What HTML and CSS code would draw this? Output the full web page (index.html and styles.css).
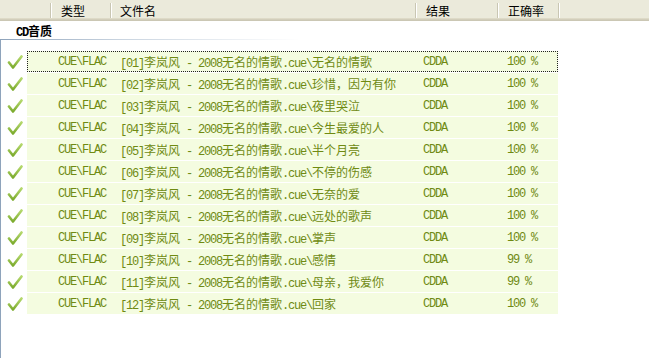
FILE: index.html
```html
<!DOCTYPE html>
<html>
<head>
<meta charset="utf-8">
<link rel="stylesheet" href="styles.css">
</head>
<body>
<svg class="defs" width="0" height="0"><defs><linearGradient id="g" x1="0" y1="0" x2="0" y2="1"><stop offset="0" stop-color="#b4d86c"/><stop offset="1" stop-color="#7cab2e"/></linearGradient></defs></svg>
<div class="header">
  <div class="hc h0"></div>
  <div class="hc h1">类型</div>
  <div class="hc h2">文件名</div>
  <div class="hc h3">结果</div>
  <div class="hc h4">正确率</div>
  <div class="hc h5"></div>
</div>
<div class="title">CD<span class="z">音质</span></div>
<div class="rule"></div>
<div class="content">
  <div class="item focus"><span class="ico"><svg width="16" height="16" viewBox="0 0 16 16"><polyline points="2,8.5 6,13.5 14.5,2.5" fill="none" stroke="url(#g)" stroke-width="2.6" stroke-linecap="round" stroke-linejoin="round"/></svg></span><div class="cells"><span class="c-type">CUE\FLAC</span><span class="c-name">[01]<span class="z">李岚风</span> - 2008<span class="z">无名的情歌</span>.cue\<span class="z">无名的情歌</span></span><span class="c-res">CDDA</span><span class="c-rate">100 %</span></div></div>
  <div class="item"><span class="ico"><svg width="16" height="16" viewBox="0 0 16 16"><polyline points="2,8.5 6,13.5 14.5,2.5" fill="none" stroke="url(#g)" stroke-width="2.6" stroke-linecap="round" stroke-linejoin="round"/></svg></span><div class="cells"><span class="c-type">CUE\FLAC</span><span class="c-name">[02]<span class="z">李岚风</span> - 2008<span class="z">无名的情歌</span>.cue\<span class="z">珍惜，因为有你</span></span><span class="c-res">CDDA</span><span class="c-rate">100 %</span></div></div>
  <div class="item"><span class="ico"><svg width="16" height="16" viewBox="0 0 16 16"><polyline points="2,8.5 6,13.5 14.5,2.5" fill="none" stroke="url(#g)" stroke-width="2.6" stroke-linecap="round" stroke-linejoin="round"/></svg></span><div class="cells"><span class="c-type">CUE\FLAC</span><span class="c-name">[03]<span class="z">李岚风</span> - 2008<span class="z">无名的情歌</span>.cue\<span class="z">夜里哭泣</span></span><span class="c-res">CDDA</span><span class="c-rate">100 %</span></div></div>
  <div class="item"><span class="ico"><svg width="16" height="16" viewBox="0 0 16 16"><polyline points="2,8.5 6,13.5 14.5,2.5" fill="none" stroke="url(#g)" stroke-width="2.6" stroke-linecap="round" stroke-linejoin="round"/></svg></span><div class="cells"><span class="c-type">CUE\FLAC</span><span class="c-name">[04]<span class="z">李岚风</span> - 2008<span class="z">无名的情歌</span>.cue\<span class="z">今生最爱的人</span></span><span class="c-res">CDDA</span><span class="c-rate">100 %</span></div></div>
  <div class="item"><span class="ico"><svg width="16" height="16" viewBox="0 0 16 16"><polyline points="2,8.5 6,13.5 14.5,2.5" fill="none" stroke="url(#g)" stroke-width="2.6" stroke-linecap="round" stroke-linejoin="round"/></svg></span><div class="cells"><span class="c-type">CUE\FLAC</span><span class="c-name">[05]<span class="z">李岚风</span> - 2008<span class="z">无名的情歌</span>.cue\<span class="z">半个月亮</span></span><span class="c-res">CDDA</span><span class="c-rate">100 %</span></div></div>
  <div class="item"><span class="ico"><svg width="16" height="16" viewBox="0 0 16 16"><polyline points="2,8.5 6,13.5 14.5,2.5" fill="none" stroke="url(#g)" stroke-width="2.6" stroke-linecap="round" stroke-linejoin="round"/></svg></span><div class="cells"><span class="c-type">CUE\FLAC</span><span class="c-name">[06]<span class="z">李岚风</span> - 2008<span class="z">无名的情歌</span>.cue\<span class="z">不停的伤感</span></span><span class="c-res">CDDA</span><span class="c-rate">100 %</span></div></div>
  <div class="item"><span class="ico"><svg width="16" height="16" viewBox="0 0 16 16"><polyline points="2,8.5 6,13.5 14.5,2.5" fill="none" stroke="url(#g)" stroke-width="2.6" stroke-linecap="round" stroke-linejoin="round"/></svg></span><div class="cells"><span class="c-type">CUE\FLAC</span><span class="c-name">[07]<span class="z">李岚风</span> - 2008<span class="z">无名的情歌</span>.cue\<span class="z">无奈的爱</span></span><span class="c-res">CDDA</span><span class="c-rate">100 %</span></div></div>
  <div class="item"><span class="ico"><svg width="16" height="16" viewBox="0 0 16 16"><polyline points="2,8.5 6,13.5 14.5,2.5" fill="none" stroke="url(#g)" stroke-width="2.6" stroke-linecap="round" stroke-linejoin="round"/></svg></span><div class="cells"><span class="c-type">CUE\FLAC</span><span class="c-name">[08]<span class="z">李岚风</span> - 2008<span class="z">无名的情歌</span>.cue\<span class="z">远处的歌声</span></span><span class="c-res">CDDA</span><span class="c-rate">100 %</span></div></div>
  <div class="item"><span class="ico"><svg width="16" height="16" viewBox="0 0 16 16"><polyline points="2,8.5 6,13.5 14.5,2.5" fill="none" stroke="url(#g)" stroke-width="2.6" stroke-linecap="round" stroke-linejoin="round"/></svg></span><div class="cells"><span class="c-type">CUE\FLAC</span><span class="c-name">[09]<span class="z">李岚风</span> - 2008<span class="z">无名的情歌</span>.cue\<span class="z">掌声</span></span><span class="c-res">CDDA</span><span class="c-rate">100 %</span></div></div>
  <div class="item"><span class="ico"><svg width="16" height="16" viewBox="0 0 16 16"><polyline points="2,8.5 6,13.5 14.5,2.5" fill="none" stroke="url(#g)" stroke-width="2.6" stroke-linecap="round" stroke-linejoin="round"/></svg></span><div class="cells"><span class="c-type">CUE\FLAC</span><span class="c-name">[10]<span class="z">李岚风</span> - 2008<span class="z">无名的情歌</span>.cue\<span class="z">感情</span></span><span class="c-res">CDDA</span><span class="c-rate">99 %</span></div></div>
  <div class="item"><span class="ico"><svg width="16" height="16" viewBox="0 0 16 16"><polyline points="2,8.5 6,13.5 14.5,2.5" fill="none" stroke="url(#g)" stroke-width="2.6" stroke-linecap="round" stroke-linejoin="round"/></svg></span><div class="cells"><span class="c-type">CUE\FLAC</span><span class="c-name">[11]<span class="z">李岚风</span> - 2008<span class="z">无名的情歌</span>.cue\<span class="z">母亲，我爱你</span></span><span class="c-res">CDDA</span><span class="c-rate">99 %</span></div></div>
  <div class="item"><span class="ico"><svg width="16" height="16" viewBox="0 0 16 16"><polyline points="2,8.5 6,13.5 14.5,2.5" fill="none" stroke="url(#g)" stroke-width="2.6" stroke-linecap="round" stroke-linejoin="round"/></svg></span><div class="cells"><span class="c-type">CUE\FLAC</span><span class="c-name">[12]<span class="z">李岚风</span> - 2008<span class="z">无名的情歌</span>.cue\<span class="z">回家</span></span><span class="c-res">CDDA</span><span class="c-rate">100 %</span></div></div>
</div>
</body>
</html>
```
FILE: styles.css
```css
html, body {
  margin: 0;
  padding: 0;
  background: #fff;
  height: 100%;
  overflow: hidden;
}
body {
  font-family: "Noto Sans CJK SC", sans-serif;
  font-size: 12px;
}
.defs {
  position: absolute;
  width: 0;
  height: 0;
}
.header {
  display: flex;
  height: 21px;
  box-sizing: border-box;
  padding-top: 3px;
  background: linear-gradient(to bottom, #ebeadb 0, #ebeadb 18px, #e2dfcc 18px, #d9d5c2 19px, #cbc7b4 20px, #cbc7b4 21px);
}
.hc {
  height: 15px;
  line-height: 16px;
  box-sizing: border-box;
  padding-left: 10px;
  border-right: 1px solid #c9c6b3;
  box-shadow: 1px 0 0 #fff;
  color: #000;
  white-space: nowrap;
}
.h0 { width: 51px; padding-left: 0; }
.h1 { width: 60px; }
.h2 { width: 305px; padding-left: 9px; }
.h3 { width: 82px; }
.h4 { width: 61px; }
.h5 { flex: 1; border-right: 0; box-shadow: none; }
.title {
  height: 18px;
  line-height: 20px;
  padding-left: 16px;
  font-family: "Liberation Mono", "Noto Sans CJK SC", monospace;
  font-weight: bold;
  font-size: 12px;
  letter-spacing: -1.2px;
  color: #000;
}
.z {
  font-family: "Noto Sans CJK SC", sans-serif;
  letter-spacing: 0;
}
.rule {
  height: 1px;
  background: linear-gradient(to right, #8ea3bb 0, #c9d4e0 120px, #fff 300px);
}
.content {
  border-left: 1px solid #8ea3bb;
  height: calc(100vh - 40px);
  padding-top: 11px;
  box-sizing: border-box;
}
.item {
  display: flex;
  height: 21px;
  margin-bottom: 1px;
}
.ico {
  width: 26px;
  display: flex;
  align-items: center;
  padding-left: 6px;
  box-sizing: border-box;
}
.ico svg { display: block; }
.cells {
  display: flex;
  align-items: center;
  width: 531px;
  background: #f4fce0;
  font-family: "Liberation Mono", "Noto Sans CJK SC", monospace;
  font-size: 12px;
  letter-spacing: -1.2px;
  color: #6f8a12;
  white-space: nowrap;
}
.focus .cells {
  outline: 1px dotted #222;
  outline-offset: -1px;
}
.c-type { width: 83px; padding-left: 31px; box-sizing: border-box; }
.c-name { width: 305px; padding-left: 10px; box-sizing: border-box; }
.c-res { width: 82px; padding-left: 8px; box-sizing: border-box; }
.c-rate { flex: 1; padding-left: 10px; }
```
